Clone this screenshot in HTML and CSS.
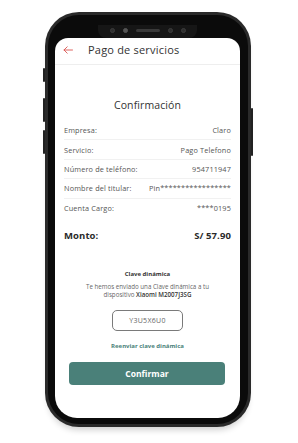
FILE: index.html
```html
<!DOCTYPE html>
<html lang="es">
<head>
<meta charset="utf-8">
<link rel="stylesheet" href="styles.css">
</head>
<body>
<div class="stage">
  <div class="phone">
    <span class="btn btn-l1"></span>
    <span class="btn btn-l2"></span>
    <span class="btn btn-l3"></span>
    <span class="btn btn-r1"></span>
    <div class="bezel">
      <div class="notch">
        <span class="cam"></span>
        <span class="cam light"></span>
        <span class="speaker"></span>
        <span class="cam"></span>
        <span class="cam"></span>
      </div>
      <div class="screen">
        <header class="topbar">
          <svg class="back" width="10" height="8" viewBox="0 0 10 8"><path d="M9.5 4H1M4.2 0.8L1 4l3.2 3.2" fill="none" stroke="#d9534f" stroke-width="0.9" stroke-linecap="round" stroke-linejoin="round"/></svg>
          <h1 class="title">Pago de servicios</h1>
        </header>
        <main class="content">
          <h2 class="heading">Confirmación</h2>
          <div class="rows">
            <div class="row"><span>Empresa:</span><span>Claro</span></div>
            <div class="row"><span>Servicio:</span><span>Pago Telefono</span></div>
            <div class="row"><span>Número de teléfono:</span><span>954711947</span></div>
            <div class="row"><span>Nombre del titular:</span><span>Pin*****************</span></div>
            <div class="row last"><span>Cuenta Cargo:</span><span>****0195</span></div>
          </div>
          <div class="amount"><span>Monto:</span><span>S/ 57.90</span></div>
          <section class="otp">
            <div class="otp-title">Clave dinámica</div>
            <p class="otp-text">Te hemos enviado una Clave dinámica a tu<br>dispositivo <b>Xiaomi M2007J3SG</b></p>
            <div class="otp-box">Y3U5X6U0</div>
            <div class="resend">Reenviar clave dinámica</div>
          </section>
          <button class="confirm">Confirmar</button>
        </main>
      </div>
    </div>
  </div>
</div>
</body>
</html>
```
FILE: styles.css
```css
* { box-sizing: border-box; margin: 0; padding: 0; }
html, body { width: 298px; height: 443px; background: #ffffff; overflow: hidden; }
body { font-family: "Open Sans", "Noto Sans", sans-serif; color: #444; }

.stage { padding: 12px 0 0 45px; }

.phone {
  position: relative;
  width: 206px;
  height: 415px;
  border-radius: 34px;
  background: #2a2a2a;
  padding: 3px;
  box-shadow: 0 6px 6px -3px rgba(0,0,0,0.18);
}
.bezel {
  width: 100%;
  height: 100%;
  border-radius: 31px;
  background: #0b0b0b;
  padding: 7px 8px 6px 7px;
  display: flex;
  flex-direction: column;
  align-items: center;
}
.notch {
  width: 99px;
  height: 13px;
  margin-top: 3px;
  background: #161616;
  border-radius: 0 0 8px 8px;
  display: flex;
  align-items: center;
  justify-content: center;
  gap: 8px;
  padding-bottom: 3px;
}
.cam { width: 5px; height: 5px; border-radius: 50%; background: #2e2e2e; border: 1px solid #3c3c3c; }
.cam.light { background: #555; border-color: #555; }
.speaker { width: 24px; height: 3px; border-radius: 2px; background: #3a3a3a; }

.btn { position: absolute; background: #222; border-radius: 1px; }
.btn-l1 { left: -2px; top: 56px; width: 2px; height: 14px; }
.btn-l2 { left: -2px; top: 86px; width: 2px; height: 24px; }
.btn-l3 { left: -2px; top: 118px; width: 2px; height: 24px; }
.btn-r1 { right: -2px; top: 96px; width: 2px; height: 48px; }

.screen {
  width: 185px;
  flex: 1;
  background: #fff;
  border-radius: 13px 13px 22px 22px;
  overflow: hidden;
  display: flex;
  flex-direction: column;
}

.topbar {
  height: 27px;
  display: flex;
  align-items: center;
  padding: 0 0 3px 8px;
  border-bottom: 1px solid #eeeeee;
}
.back { display: block; }
.title {
  margin-left: 15px;
  font-size: 11px;
  font-weight: 400;
  color: #333;
  letter-spacing: 0.2px;
  line-height: 14px;
}

.content { padding: 0 9px; display: flex; flex-direction: column; }
.heading {
  text-align: center;
  font-size: 10.5px;
  font-weight: 400;
  color: #333;
  margin-top: 32px;
  line-height: 16px;
  letter-spacing: 0.1px;
}
.rows { margin-top: 8px; }
.row {
  display: flex;
  justify-content: space-between;
  font-size: 7.3px;
  letter-spacing: 0.15px;
  color: #555;
  height: 19.4px;
  align-items: center;
  border-bottom: 1px solid #f1f1f1;
}
.row.last { border-bottom: none; }

.amount {
  display: flex;
  justify-content: space-between;
  margin-top: 11px;
  font-size: 9.5px;
  font-weight: 700;
  color: #2a2a2a;
  line-height: 14px;
  letter-spacing: 0.1px;
}

.otp { display: flex; flex-direction: column; align-items: center; margin-top: 27px; }
.otp-title { font-size: 6px; font-weight: 700; color: #333; line-height: 9px; }
.otp-text { margin-top: 4px; font-size: 6.2px; line-height: 8px; text-align: center; color: #666; }
.otp-text b { color: #333; font-weight: 600; }
.otp-box {
  margin-top: 11px;
  width: 71px;
  height: 21px;
  border: 1px solid #7a7a7a;
  border-radius: 5px;
  display: flex;
  align-items: center;
  justify-content: center;
  font-size: 7px;
  color: #666;
  letter-spacing: 0.3px;
}
.resend { margin-top: 11px; font-size: 6px; font-weight: 700; color: #4a7f79; line-height: 9px; }

.confirm {
  margin: 11px 6px 0 5px;
  height: 23px;
  border: none;
  border-radius: 4px;
  background: #4a8079;
  color: #fff;
  font-family: "Open Sans", "Noto Sans", sans-serif;
  font-weight: 700;
  font-size: 8.5px;
}
```
